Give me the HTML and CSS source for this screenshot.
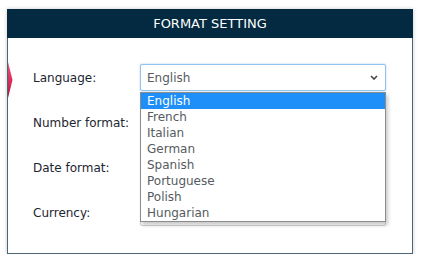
FILE: index.html
```html
<!DOCTYPE html>
<html lang="en">
<head>
<meta charset="utf-8">
<title>Format Setting</title>
<link rel="stylesheet" href="styles.css">
</head>
<body>
<div class="panel">
  <svg class="marker" width="5" height="36" viewBox="0 0 5 36" aria-hidden="true">
    <defs>
      <linearGradient id="mg" x1="0" y1="0" x2="0" y2="1">
        <stop offset="0" stop-color="#e8557a"/>
        <stop offset="0.6" stop-color="#d42a55"/>
        <stop offset="1" stop-color="#9e1840"/>
      </linearGradient>
    </defs>
    <polygon points="0,0 4.5,18 0,36" fill="url(#mg)"/>
  </svg>
  <div class="header">FORMAT SETTING</div>
  <div class="form">
    <div class="label">Language:</div>
    <div class="field">
      <div class="select focused"><span>English</span>
        <svg class="chev" width="8" height="5" viewBox="0 0 8 5"><path d="M1 1 L4 4 L7 1" fill="none" stroke="#444" stroke-width="1.6"/></svg>
      </div>
      <ul class="listbox">
        <li class="active">English</li>
        <li>French</li>
        <li>Italian</li>
        <li>German</li>
        <li>Spanish</li>
        <li>Portuguese</li>
        <li>Polish</li>
        <li>Hungarian</li>
      </ul>
    </div>
    <div class="label">Number format:</div>
    <div class="field"><div class="select"></div></div>
    <div class="label">Date format:</div>
    <div class="field"><div class="select"></div></div>
    <div class="label">Currency:</div>
    <div class="field"><div class="select"></div></div>
  </div>
</div>
</body>
</html>
```
FILE: styles.css
```css
html, body {
  margin: 0;
  padding: 0;
  background: #ffffff;
}
body {
  padding: 9px 0 0 7px;
  font-family: "DejaVu Sans", sans-serif;
}
.panel {
  position: relative;
  box-sizing: border-box;
  width: 406px;
  height: 245px;
  border: 1px solid #4d6474;
  border-top: none;
  background: #ffffff;
  box-shadow: 0 0 4px rgba(0, 0, 0, 0.22);
}
.marker {
  position: absolute;
  left: 0;
  top: 53px;
}
.header {
  height: 29px;
  margin: 0 -1px;
  background: #032a40;
  color: #ffffff;
  font-size: 13px;
  line-height: 29px;
  text-align: center;
  letter-spacing: 0;
}
.form {
  display: grid;
  grid-template-columns: 107px 246px;
  grid-auto-rows: 27px;
  row-gap: 18px;
  padding: 26px 0 0 25px;
}
.label {
  display: flex;
  align-items: center;
  font-size: 12px;
  color: #1c2630;
}
.field {
  position: relative;
}
.select {
  box-sizing: border-box;
  height: 27px;
  border: 1px solid #d3d3d3;
  border-radius: 2px;
  background: #ffffff;
  display: flex;
  align-items: center;
  justify-content: space-between;
  padding: 0 7px 0 6px;
  font-size: 12px;
  color: #555b60;
}
.select.focused {
  border-color: #93c3ec;
  box-shadow: 0 0 2px rgba(110, 170, 230, 0.6);
}
.chev {
  display: block;
}
.listbox {
  position: absolute;
  left: 0;
  top: 28px;
  box-sizing: border-box;
  width: 246px;
  margin: 0;
  padding: 0;
  list-style: none;
  background: #ffffff;
  border: 1px solid #8c8c8c;
  box-shadow: 2px 3px 4px rgba(0, 0, 0, 0.22);
  z-index: 2;
}
.listbox li {
  height: 16px;
  line-height: 16px;
  padding-left: 6px;
  font-size: 12px;
  color: #555b60;
}
.listbox li.active {
  background: #1e8ff8;
  color: #ffffff;
}
```
